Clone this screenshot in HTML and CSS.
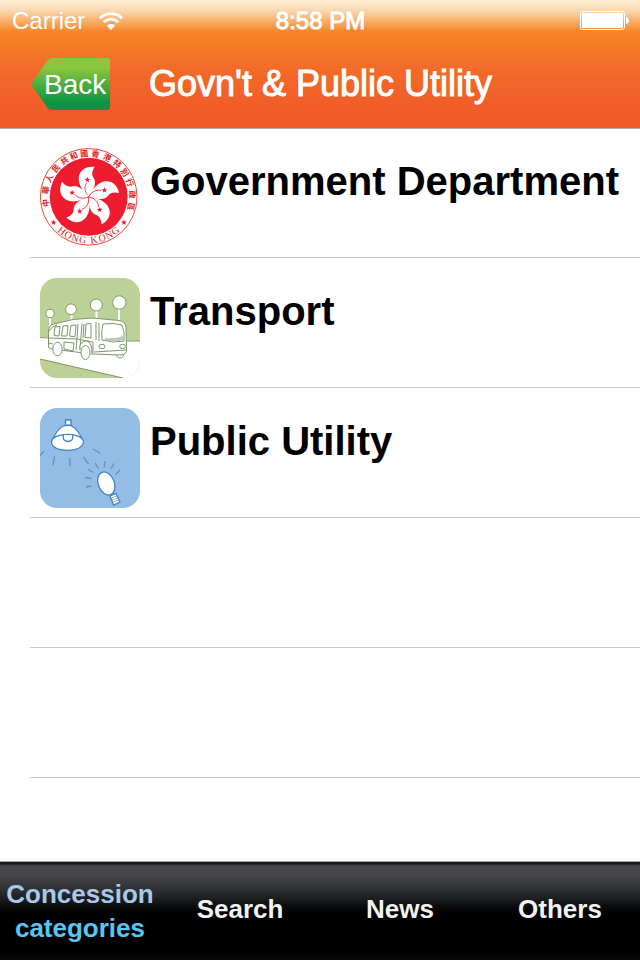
FILE: index.html
```html
<!DOCTYPE html>
<html lang="en">
<head>
<meta charset="utf-8">
<meta name="viewport" content="width=device-width, initial-scale=1">
<title>Govn't &amp; Public Utility</title>
<link rel="stylesheet" href="styles.css">
</head>
<body>
<div class="app">
  <header class="header">
    <div class="status">
      <div class="carrier">
        <span>Carrier</span>
        <svg class="wifi" viewBox="0 0 24 18" aria-hidden="true">
          <g fill="none" stroke="#fff" stroke-width="2.8">
            <path d="M1 6.3C7.2.1 16.8.1 23 6.3"/>
            <path d="M4.7 10.2C8.8 6 15.2 6 19.3 10.2"/>
          </g>
          <path fill="#fff" d="M12 18L7.800 13.600C10.200 11.300 13.800 11.300 16.200 13.600Z"/>
        </svg>
      </div>
      <span class="clock">8:58 PM</span>
      <svg class="battery" viewBox="0 0 50 20" aria-hidden="true">
        <rect x="1.500" y=".5" width="44" height="18" rx="2.500" fill="none" stroke="#fff"/>
        <rect x="3" y="2" width="41" height="15" rx="1" fill="#fff"/>
        <path fill="#fff" d="M47 6C51 7 51 12 47 13Z"/>
      </svg>
    </div>
    <div class="navbar">
      <button class="back" type="button">
        <svg class="back-shape" viewBox="0 0 78 52" preserveAspectRatio="none" aria-hidden="true">
          <defs>
            <linearGradient id="green" x1="0" y1="0" x2="0" y2="1">
              <stop offset=".18" stop-color="#8cc63f"/>
              <stop offset=".86" stop-color="#0b9444"/>
            </linearGradient>
          </defs>
          <path fill="url(#green)" d="M20 0H75Q78 0 78 3V49Q78 52 75 52H20Q17 52 15 49L1 29Q-1 26 1 23L15 3Q17 0 20 0Z"/>
        </svg>
        <span class="back-label">Back</span>
      </button>
      <h1 class="title">Govn't &amp; Public Utility</h1>
    </div>
  </header>

  <main class="content">
    <ul class="list">
      <li class="row">
        <svg class="icon" viewBox="0 0 100 100" role="img" aria-label="Hong Kong emblem">
          <defs>
            <path id="star" d="M0-3L.8-1 2.900-.9 1.200.4 1.800 2.400 0 1.200-1.800 2.400-1.200.4-2.900-.9-.8-1Z"/>
            <g id="petal">
              <path fill="#fff" d="M0 0C-6-6-10-11-10-19C-9-27-3-31 6-30C2.500-25 3-21 5.500-18C8-12 4-6 0 0Z"/>
              <path fill="none" stroke="#ed1c2e" stroke-width=".8" d="M0 0C-4-5-5-9-2-14"/>
              <use href="#star" x="-1.300" y="-17" fill="#ed1c2e"/>
            </g>
          </defs>
          <circle cx="48.700" cy="48.800" r="48.300" fill="#fff" stroke="#e84a35"/>
          <circle cx="48.700" cy="48.800" r="39" fill="#ed1c2e"/>
          <g transform="translate(48.700 48.800)">
            <use href="#petal"/>
            <use href="#petal" transform="rotate(72)"/>
            <use href="#petal" transform="rotate(144)"/>
            <use href="#petal" transform="rotate(216)"/>
            <use href="#petal" transform="rotate(288)"/>
          </g>
          <use href="#star" x="13.500" y="74.500" fill="#ed1c2e"/>
          <use href="#star" x="84" y="74.500" fill="#ed1c2e"/>
          <g class="emblem-chars">
            <text transform="translate(48.700 48.800) rotate(-98)" y="-40.500">中</text>
            <text transform="translate(48.700 48.800) rotate(-81)" y="-40.500">華</text>
            <text transform="translate(48.700 48.800) rotate(-65)" y="-40.500">人</text>
            <text transform="translate(48.700 48.800) rotate(-49)" y="-40.500">民</text>
            <text transform="translate(48.700 48.800) rotate(-34)" y="-40.500">共</text>
            <text transform="translate(48.700 48.800) rotate(-20)" y="-40.500">和</text>
            <text transform="translate(48.700 48.800) rotate(-6)" y="-40.500">國</text>
            <text transform="translate(48.700 48.800) rotate(9)" y="-40.500">香</text>
            <text transform="translate(48.700 48.800) rotate(25)" y="-40.500">港</text>
            <text transform="translate(48.700 48.800) rotate(41)" y="-40.500">特</text>
            <text transform="translate(48.700 48.800) rotate(56)" y="-40.500">別</text>
            <text transform="translate(48.700 48.800) rotate(71)" y="-40.500">行</text>
            <text transform="translate(48.700 48.800) rotate(87)" y="-40.500">政</text>
            <text transform="translate(48.700 48.800) rotate(103)" y="-40.500">區</text>
          </g>
          <g class="emblem-name">
            <text transform="translate(48.700 48.800) rotate(38)" y="46.700">H</text>
            <text transform="translate(48.700 48.800) rotate(28)" y="46.700">O</text>
            <text transform="translate(48.700 48.800) rotate(18)" y="46.700">N</text>
            <text transform="translate(48.700 48.800) rotate(8)" y="46.700">G</text>
            <text transform="translate(48.700 48.800) rotate(-7)" y="46.700">K</text>
            <text transform="translate(48.700 48.800) rotate(-18)" y="46.700">O</text>
            <text transform="translate(48.700 48.800) rotate(-28)" y="46.700">N</text>
            <text transform="translate(48.700 48.800) rotate(-38)" y="46.700">G</text>
          </g>
        </svg>
        <h2 class="name">Government Department</h2>
      </li>
      <li class="row">
        <svg class="icon" viewBox="0 0 100 100" role="img" aria-label="Bus">
          <defs><clipPath id="tile"><rect width="100" height="100" rx="17"/></clipPath></defs>
          <g clip-path="url(#tile)">
            <rect width="100" height="100" fill="#bbd197"/>
            <path fill="#fff" d="M0 59L100 63V100H83L0 81Z"/>
            <path fill="none" stroke="#6f8d57" stroke-width=".9" d="M0 59.500L9 60M86 63H100M0 81L83 100"/>
            <path stroke="#fff" stroke-width="2" d="M10 38V49M31.500 35V45M56.500 31V42M79 29V42"/>
            <g fill="#fff" stroke="#819c68" stroke-width="1">
              <circle cx="10" cy="35.500" r="4.200"/>
              <circle cx="31" cy="31.300" r="5.400"/>
              <circle cx="56.300" cy="27" r="6"/>
              <circle cx="79.300" cy="24.500" r="6.700"/>
            </g>
            <g fill="#fff" stroke="#7c9766" stroke-width="1" stroke-linejoin="round">
              <ellipse cx="80" cy="75.500" rx="4" ry="4.500"/>
              <path d="M8.500 69.500V53Q9 47 14 46Q33 40 52 40L79 42.500Q85 43 86 49L86.500 73.500Q85 77 81 77L52 76L12 71Z"/>
              <g fill="none">
                <path d="M9 53Q12 48 17 47M9 60L37 61L53 64V75M9 65L13 66M86 72L54 74"/>
                <path d="M15 49L20 48.500L19 58L14 57.500ZM23 48L28 47.500L27 58L21.500 58ZM31 47.500L36 47L35 59L29.500 58ZM46 46L51 45.500V60L45 59.500Z"/>
                <path d="M38 46L37 61L36 72M42 45.500L40 72M44 46L43 60M24 64L34 65L33 73L24 71Z"/>
                <path d="M56 44V62M63 46L73 45.500L82 47Q85 54 84 63L73 64L62 62Q61 53 63 46ZM59 45V63"/>
              </g>
              <path d="M40 72V67Q44 61 49 64Q52 66 52 76"/>
              <ellipse cx="17.500" cy="71" rx="4.700" ry="6.700"/>
              <ellipse cx="45.500" cy="74.500" rx="4.500" ry="7"/>
              <ellipse cx="62" cy="68.500" rx="3" ry="2.200"/>
              <ellipse cx="82.500" cy="68.500" rx="2.800" ry="2.200"/>
            </g>
            <path fill="#bcc9b3" d="M65 60Q75 61 83 58V62L73 64L65 62Z"/>
          </g>
        </svg>
        <h2 class="name">Transport</h2>
      </li>
      <li class="row">
        <svg class="icon" viewBox="0 0 100 100" role="img" aria-label="Lamps">
          <rect width="100" height="100" rx="17" fill="#94bde5"/>
          <g fill="#fff" stroke="#4084c6" stroke-width="1.300">
            <path d="M25.500 12H31V17.500H25.500Z"/>
            <path d="M12 33Q17 20 25 17.500Q28 17 31 17.500Q39 22 43 33Z"/>
            <path d="M11.500 34Q12 27 28 26.500Q43 27 43.500 34Q42 42 27.500 42.300Q12 42 11.500 34Z"/>
            <path d="M23.500 27Q22 33 28 33.500Q34 33 32.500 27"/>
            <ellipse cx="66.300" cy="75.500" rx="8" ry="12" transform="rotate(-22 66.300 75.500)"/>
            <path d="M70 88L76 85.500L80 94L73.500 97Z"/>
            <path fill="none" stroke-width=".6" d="M71 90L77 88M72 92L78 90M73 94L79 92"/>
          </g>
          <path fill="none" stroke="#5b92c9" stroke-width="1.300" d="M4 43L0 47.500M14.500 48.500L13 57M29.800 50V58M43.500 49L48.500 56M53 41L60.500 45.500M55 55L58.500 60.500M65 53L64 59.500M74 55.500L71 60.500M80 62L75.500 66.500M48 61.500L53.500 64.500M45 69.500L51.500 70.500M46 79L51.500 78"/>
        </svg>
        <h2 class="name">Public Utility</h2>
      </li>
      <li class="row"></li>
      <li class="row"></li>
    </ul>
  </main>

  <nav class="tabs">
    <a class="tab tab-active" href="#categories">Concession <span class="tab-second">categories</span></a>
    <a class="tab" href="#search">Search</a>
    <a class="tab" href="#news">News</a>
    <a class="tab" href="#others">Others</a>
  </nav>
</div>
</body>
</html>
```
FILE: styles.css
```css
* {
  box-sizing: border-box;
}

body {
  margin: 0;
  background: #fff;
  color: #000;
  font-family: "Liberation Sans", Arial, sans-serif;
}

.app {
  display: flex;
  flex-direction: column;
  min-height: 100vh;
}

.header {
  border-bottom: 1px solid #b2a8a4;
  background: linear-gradient(#fdecd6 0, #fad9b0 8%, #f68424 25%, #f58025 32%, #f26a29 55%, #f15a29 90%);
  color: #fff;
}

.status {
  display: grid;
  grid-template-columns: 1fr auto 1fr;
  align-items: center;
  height: 40px;
  padding: 0 11px 0 12px;
  font-size: 24px;
  line-height: 42px;
}

.carrier {
  display: flex;
  align-items: center;
  gap: 14px;
}

.wifi {
  width: 24px;
  height: 18px;
}

.clock {
  -webkit-text-stroke: 1px #fff;
}

.battery {
  justify-self: end;
  width: 50px;
  height: 20px;
}

.navbar {
  display: flex;
  align-items: center;
  gap: 39px;
  height: 88px;
  padding: 0 32px;
}

.back {
  position: relative;
  flex: none;
  width: 78px;
  height: 52px;
  padding: 2px 4px 0 12px;
  border: 0;
  background: none;
  color: #fff;
  font: 28px/50px "Liberation Sans", Arial, sans-serif;
  white-space: nowrap;
}

.back-shape {
  position: absolute;
  inset: 0;
  width: 100%;
  height: 100%;
}

.back-label {
  position: relative;
}

.title {
  margin: 0;
  font-size: 36px;
  font-weight: 400;
  line-height: 40px;
  -webkit-text-stroke: 1px #fff;
}

.content {
  flex: 1;
}

.list {
  margin: 0;
  padding: 0 0 0 30px;
  list-style: none;
}

.row {
  display: flex;
  align-items: flex-start;
  gap: 10px;
  height: 130px;
  padding: 20px 0 0 10px;
  border-bottom: 1px solid #c8c7cc;
}

.row:first-child {
  height: 129px;
  padding-top: 19px;
}

.icon {
  flex: none;
  width: 100px;
  height: 100px;
}

.emblem-chars {
  fill: #d9231f;
  font: 700 8px "Noto Sans CJK TC", sans-serif;
  text-anchor: middle;
}

.emblem-name {
  fill: #d9231f;
  font: 10px "Liberation Serif", serif;
  text-anchor: middle;
}

.name {
  margin: 0;
  padding-top: 10px;
  font-size: 40px;
  font-weight: 700;
  line-height: 46px;
  white-space: nowrap;
}

.tabs {
  display: grid;
  grid-template-columns: repeat(4, 1fr);
  height: 99px;
  border-top: 1px solid #a5a5a5;
  background: linear-gradient(#151515 0, #1c1c1c 2%, #48484a 4%, #464648 14%, #2c2d2f 30%, #111314 42%, #000 52%, #000 92%, #0b0808 100%);
}

.tab {
  display: flex;
  flex-direction: column;
  align-items: center;
  justify-content: center;
  padding-bottom: 4px;
  color: #f2f2f2;
  font-size: 26px;
  font-weight: 700;
  line-height: 34px;
  text-decoration: none;
}

.tab-active {
  padding: 0;
  color: #a5c8ec;
}

.tab-second {
  color: #5bc5f2;
}
```
